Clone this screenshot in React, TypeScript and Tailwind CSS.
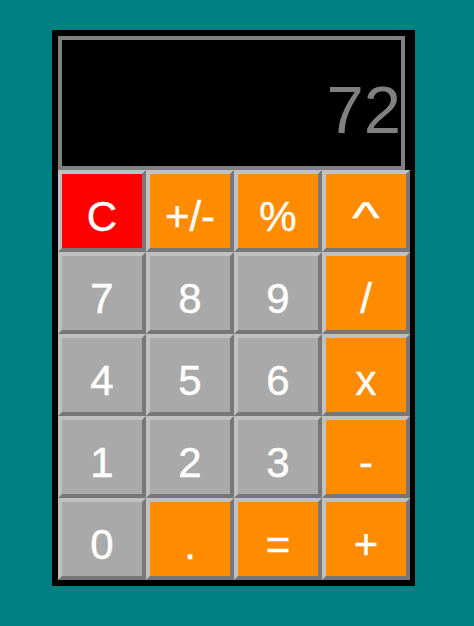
const rows: { label: string; kind: 'red' | 'orange' | 'gray' }[][] = [
  [
    { label: 'C', kind: 'red' },
    { label: '+/-', kind: 'orange' },
    { label: '%', kind: 'orange' },
    { label: '^', kind: 'orange' },
  ],
  [
    { label: '7', kind: 'gray' },
    { label: '8', kind: 'gray' },
    { label: '9', kind: 'gray' },
    { label: '/', kind: 'orange' },
  ],
  [
    { label: '4', kind: 'gray' },
    { label: '5', kind: 'gray' },
    { label: '6', kind: 'gray' },
    { label: 'x', kind: 'orange' },
  ],
  [
    { label: '1', kind: 'gray' },
    { label: '2', kind: 'gray' },
    { label: '3', kind: 'gray' },
    { label: '-', kind: 'orange' },
  ],
  [
    { label: '0', kind: 'gray' },
    { label: '.', kind: 'orange' },
    { label: '=', kind: 'orange' },
    { label: '+', kind: 'orange' },
  ],
]

const fills = {
  red: 'bg-[#ff0000]',
  orange: 'bg-[#ff8c00]',
  gray: 'bg-[#a9a9a9]',
}

function Key({ label, kind }: { label: string; kind: 'red' | 'orange' | 'gray' }) {
  return (
    <button
      className={`w-[88px] h-[82px] flex items-center justify-center pt-[10px] border-4 border-t-[#c0c0c0] border-l-[#c0c0c0] border-b-[#777777] border-r-[#777777] text-white text-[42px] [-webkit-text-stroke:0.4px_#ffffff] ${fills[kind]}`}
      style={{ fontFamily: '"Liberation Sans", Arial, sans-serif' }}
    >
      {label === '^' ? <span className="inline-block scale-x-[1.4] mt-[2px]">^</span> : label}
    </button>
  )
}

export default function App() {
  return (
    <div className="min-h-screen w-full bg-[#008080] pt-[30px] pl-[52px]">
      <div className="w-[363px] bg-black pt-[6px] pl-[6px] pr-[5px] pb-[6px]">
        <div className="w-[347px] h-[134px] border-4 border-[#808080] flex items-end justify-end pb-[23px]">
          <span
            className="text-[#808080] text-[67px] leading-none"
            style={{ fontFamily: '"Liberation Sans", Arial, sans-serif' }}
          >
            72
          </span>
        </div>
        <div className="flex flex-col">
          {rows.map((row, i) => (
            <div key={i} className="flex">
              {row.map((k) => (
                <Key key={k.label} label={k.label} kind={k.kind} />
              ))}
            </div>
          ))}
        </div>
      </div>
    </div>
  )
}
